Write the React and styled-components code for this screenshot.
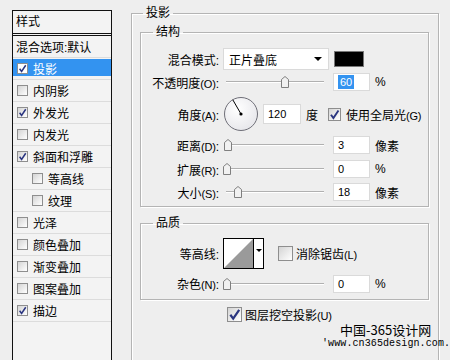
import styled, { createGlobalStyle } from 'styled-components';

const GlobalStyle = createGlobalStyle`
    html, body { margin: 0; padding: 0; }
    body {
        background: #eeeeee;
        font-family: "Liberation Sans", "Noto Sans CJK SC", sans-serif;
        font-size: 12px;
        color: #000;
    }
`;

const Window = styled.div`
    position: relative;
    display: flex;
    width: 450px;
    height: 360px;
    overflow: hidden;
    background: #eeeeee;
`;

const LeftPane = styled.div`
    width: 119px;
    flex-shrink: 0;
    padding: 10px 0 0 12px;
`;

const StyleList = styled.div`
    width: 100px;
    height: 400px;
    box-sizing: border-box;
    border: 1px solid #111;
    background: #f3f3f3;
`;

const ListHeader = styled.div`
    height: 22px;
    line-height: 22px;
    padding-left: 3px;
    border-bottom: 3px double #111;
`;

const ListRow = styled.div`
    display: flex;
    align-items: center;
    gap: 5px;
    height: 21px;
    padding-left: ${p => p.$indent}px;
    border-bottom: 1px solid #dcdcdc;
    color: ${p => p.$selected ? '#fff' : '#000'};
    background: ${p => p.$selected
        ? 'linear-gradient(#3393f0, #3393f0) 0 1px / 100% 17px no-repeat'
        : 'transparent'};
`;

const Box = styled.span`
    display: inline-flex;
    align-items: center;
    justify-content: center;
    flex-shrink: 0;
    width: ${p => p.$size}px;
    height: ${p => p.$size}px;
    margin-left: ${p => p.$ml || 0}px;
    box-sizing: border-box;
    border: 1px solid #8e8e8e;
    background: ${p => p.$plain ? '#fff' : 'linear-gradient(135deg, #d4d4d4, #ffffff)'};

    & svg { display: block; }
`;

const Check = ({ checked, size = 11, ml, plain }) => (
    <Box $size={size} $ml={ml} $plain={plain}>
        {checked && (
            <svg width={size - 2} height={size - 2} viewBox="0 0 10 10">
                <path d="M1.8 5.2 L4 8.2 L8.6 1.4" fill="none" stroke="#2a3580" strokeWidth="1.7" />
            </svg>
        )}
    </Box>
);

const RightPane = styled.div`
    flex: 1;
    padding-right: 11px;
`;

const Group = styled.fieldset`
    margin: ${p => p.$mt}px 0 0;
    padding: ${p => p.$pad};
    border: 1px solid #b4b4b4;
    box-shadow: 1px 1px 0 #fff, inset 1px 1px 0 #fff;
    min-width: 0;
`;

const Legend = styled.legend`
    margin-left: ${p => p.$offset}px;
    padding: 0 3px;
    line-height: 14px;
    font-size: 12px;
`;

const Row = styled.div`
    display: flex;
    align-items: center;
    height: ${p => p.$h}px;
    margin-top: ${p => p.$mt || 0}px;
`;

const Label = styled.span`
    width: 78px;
    margin-right: 4px;
    flex-shrink: 0;
    text-align: right;
    white-space: nowrap;
`;

const Text = styled.span`
    margin-left: ${p => p.$ml || 0}px;
    white-space: nowrap;
`;

// access keys like (O) are drawn in a smaller latin face, as in the dialog
const Key = styled.span`
    font-size: 11px;
    letter-spacing: -0.2px;
`;

const withKey = (text) => {
    const m = text.match(/^(.*?)(\([A-Z]\))(.*)$/);
    if (!m) return text;
    return <>{m[1]}<Key>{m[2]}</Key>{m[3]}</>;
};

const Select = styled.div`
    display: flex;
    align-items: center;
    justify-content: space-between;
    width: 106px;
    height: 22px;
    box-sizing: border-box;
    padding: 0 6px 0 5px;
    background: #fff;
    border: 1px solid #dadada;
`;

const Arrow = styled.span`
    width: 0;
    height: 0;
    border-left: 4px solid transparent;
    border-right: 4px solid transparent;
    border-top: 4px solid #000;
`;

const Swatch = styled.div`
    width: 30px;
    height: 16px;
    margin-left: 5px;
    box-sizing: border-box;
    background: #000;
    border: 1px solid #777;
`;

const SliderWrap = styled.div`
    position: relative;
    width: 104px;
    height: 14px;
    flex-shrink: 0;
`;

const Track = styled.div`
    margin: 6px 3px 0;
    height: 1px;
    background: #b0b0b0;
    border-bottom: 1px solid #fff;
`;

const Thumb = styled.svg`
    position: absolute;
    top: 1px;
    display: block;
`;

const Slider = ({ pct }) => (
    <SliderWrap>
        <Track />
        <Thumb width="8" height="12" viewBox="0 0 8 12" style={{ left: 3 + pct * 0.98 - 4 }}>
            <path d="M0.5 3.5 L4 0.5 L7.5 3.5 V11.5 H0.5 Z" fill="#f1f1f1" stroke="#7f7f7f" />
        </Thumb>
    </SliderWrap>
);

const NumBox = styled.div`
    width: ${p => p.$w || 37}px;
    height: ${p => p.$h || 18}px;
    margin-left: ${p => p.$ml || 0}px;
    box-sizing: border-box;
    padding-left: 4px;
    background: #fff;
    border: 1px solid #dadada;
    font-size: 11px;
    line-height: ${p => (p.$h || 18) - 2}px;
`;

const Highlight = styled.span`
    background: #3393f0;
    color: #fff;
    padding: 1px 2px;
`;

const ContourBox = styled.div`
    display: flex;
    width: 41px;
    height: 31px;
    box-sizing: border-box;
    border: 1px solid #000;
    background: #fff;
    flex-shrink: 0;

    & svg { display: block; }
`;

const ContourArrow = styled.div`
    display: flex;
    align-items: center;
    justify-content: center;
    flex: 1;
    border-left: 1px solid #000;
`;

const SmallArrow = styled(Arrow)`
    border-left-width: 3px;
    border-right-width: 3px;
    border-top-width: 3px;
    margin-top: -6px;
`;

const Watermark = styled.div`
    position: absolute;
    left: 322px;
    top: 323px;
    line-height: 14px;
`;

const MarkTitle = styled.div`
    padding-left: 18px;
    font-size: 13px;
    font-family: "Noto Sans CJK SC", sans-serif;
`;

const MarkUrl = styled.div`
    font-family: "Liberation Mono", monospace;
    font-size: 10px;
    letter-spacing: 0.1px;
`;

const listItems = [
    { name: '投影', checked: true, selected: true },
    { name: '内阴影' },
    { name: '外发光', checked: true },
    { name: '内发光' },
    { name: '斜面和浮雕', checked: true },
    { name: '等高线', sub: true },
    { name: '纹理', sub: true },
    { name: '光泽' },
    { name: '颜色叠加' },
    { name: '渐变叠加' },
    { name: '图案叠加' },
    { name: '描边', checked: true },
];

const sliders = [
    { label: '距离(D):', pct: 2, value: '3', unit: '像素', mt: 3 },
    { label: '扩展(R):', pct: 1, value: '0', unit: '%', mt: 4 },
    { label: '大小(S):', pct: 12, value: '18', unit: '像素', mt: 3 },
];

export default function App() {
    return (
        <Window>
            <GlobalStyle />
            <LeftPane>
                <StyleList>
                    <ListHeader>样式</ListHeader>
                    <ListRow $indent={3}>混合选项:默认</ListRow>
                    {listItems.map(item => (
                        <ListRow key={item.name} $indent={item.sub ? 19 : 4} $selected={item.selected}>
                            <Check checked={item.checked} plain={item.selected} />
                            {item.name}
                        </ListRow>
                    ))}
                </StyleList>
            </LeftPane>

            <RightPane>
                <Group $mt={6} $pad="0 9px 60px 8px">
                    <Legend $offset={3}>投影</Legend>

                    <Group $mt={5} $pad="8px 0 4px 0">
                        <Legend $offset={12}>结构</Legend>
                        <Row $h={24}>
                            <Label>混合模式:</Label>
                            <Select>正片叠底<Arrow /></Select>
                            <Swatch />
                        </Row>
                        <Row $h={20} $mt={1}>
                            <Label>{withKey('不透明度(O):')}</Label>
                            <Slider pct={60} />
                            <NumBox $ml={6}><Highlight>60</Highlight></NumBox>
                            <Text $ml={5}>%</Text>
                        </Row>
                        <Row $h={36} $mt={4}>
                            <Label>{withKey('角度(A):')}</Label>
                            <svg width="36" height="36" viewBox="0 0 36 36">
                                <defs>
                                    <radialGradient id="dialFill" cx="40%" cy="35%" r="70%">
                                        <stop offset="0" stopColor="#ffffff" />
                                        <stop offset="1" stopColor="#e6e6ea" />
                                    </radialGradient>
                                </defs>
                                <circle cx="18" cy="18" r="16.5" fill="url(#dialFill)" stroke="#6f6f78" strokeWidth="1" />
                                <line x1="18" y1="18" x2="9.8" y2="3.8" stroke="#000" strokeWidth="1" />
                                <circle cx="18" cy="18" r="1.6" fill="#000" />
                            </svg>
                            <NumBox $w={38} $h={20} $ml={4}>120</NumBox>
                            <Text $ml={5}>度</Text>
                            <Check checked size={13} ml={10} />
                            <Text $ml={5}>{withKey('使用全局光(G)')}</Text>
                        </Row>
                        {sliders.map(s => (
                            <Row key={s.label} $h={20} $mt={s.mt}>
                                <Label>{withKey(s.label)}</Label>
                                <Slider pct={s.pct} />
                                <NumBox $ml={6}>{s.value}</NumBox>
                                <Text $ml={5}>{s.unit}</Text>
                            </Row>
                        ))}
                    </Group>

                    <Group $mt={9} $pad="8px 0 6px 0">
                        <Legend $offset={12}>品质</Legend>
                        <Row $h={31}>
                            <Label>等高线:</Label>
                            <ContourBox>
                                <svg width="29" height="29" viewBox="0 0 29 29">
                                    <path d="M0 29 L29 0 V29 Z" fill="#9a9a9a" />
                                </svg>
                                <ContourArrow><SmallArrow /></ContourArrow>
                            </ContourBox>
                            <Check size={15} ml={14} />
                            <Text $ml={3}>{withKey('消除锯齿(L)')}</Text>
                        </Row>
                        <Row $h={19} $mt={5}>
                            <Label>{withKey('杂色(N):')}</Label>
                            <Slider pct={1} />
                            <NumBox $ml={6}>0</NumBox>
                            <Text $ml={5}>%</Text>
                        </Row>
                    </Group>

                    <Row $h={15} $mt={7}>
                        <Check checked size={15} ml={87} />
                        <Text $ml={3}>{withKey('图层挖空投影(U)')}</Text>
                    </Row>
                </Group>
            </RightPane>

            <Watermark>
                <MarkTitle>中国-365设计网</MarkTitle>
                <MarkUrl>'www.cn365design.com.</MarkUrl>
            </Watermark>
        </Window>
    );
}
